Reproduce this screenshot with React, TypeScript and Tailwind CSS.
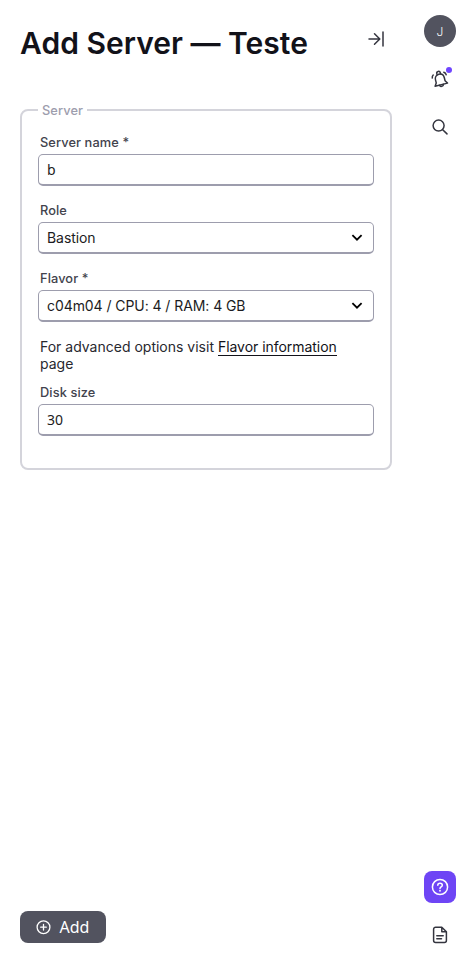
import React from "react";

const fieldBox =
  "flex h-8 w-full items-center justify-between rounded-[5px] border border-b-2 border-[#9d9dad] bg-white pl-2 pr-[9px] text-[14px] text-[#1c1c22]";

function Label({ children }: { children: React.ReactNode }) {
  return (
    <label className="block h-5 pl-[2px] pt-px text-[12.8px] leading-4 font-medium tracking-[0.1px] text-[#42434d]">
      {children}
    </label>
  );
}

function Chevron() {
  return (
    <svg width="14" height="14" viewBox="0 0 14 14" fill="none" stroke="#000" strokeWidth="1.8">
      <path d="M2.400 4.200 7 8.700l4.600-4.500" />
    </svg>
  );
}

function SelectField({ label, value }: { label: string; value: string }) {
  return (
    <div>
      <Label>{label}</Label>
      <div className={fieldBox}>
        <span className="tracking-[-0.07px]">{value}</span>
        <Chevron />
      </div>
    </div>
  );
}

function TextField({ label, value }: { label: string; value: string }) {
  return (
    <div>
      <Label>{label}</Label>
      <input className={fieldBox + " font-['Noto_Sans',sans-serif] outline-none"} defaultValue={value} />
    </div>
  );
}

function BellIcon() {
  return (
    <svg width="20" height="20" viewBox="0 0 20 20" fill="none" stroke="#34353f" strokeWidth="1.5" strokeLinecap="round" strokeLinejoin="round">
      <g transform="rotate(-14 10 10)">
        <path d="M3.500 15.800h12.800l-1.800-2.900V9.800c0-2.700-1.800-4.700-4.500-4.700S5.400 7.100 5.400 9.800v3.100z" />
        <path d="M8.200 5.100V4a1.800 1.800 0 0 1 3.600 0v1.100M8 16c.2 2.100 3.800 2.100 4 0" />
      </g>
      <path d="M3.200 6c-.8.800-1.100 1.900-.9 3M13.800 3.300c1.200.4 2 1.200 2.400 2.400" />
    </svg>
  );
}

function Rail() {
  return (
    <aside className="flex w-12 flex-col items-center justify-between pt-[15px] pb-[19px]">
      <div className="flex flex-col items-center">
        <div className="flex size-8 items-center justify-center rounded-full bg-[#52535f] pt-px text-[12px] font-light text-[#f4f4f8]">
          J
        </div>
        <div className="relative mt-[22px] flex size-5">
          <BellIcon />
          <span className="absolute -top-[2px] left-4 size-[6px] rounded-full bg-[#6f45ff]" />
        </div>
        <svg className="mt-7" width="20" height="20" viewBox="0 0 20 20" fill="none" stroke="#34353f" strokeWidth="1.500" strokeLinecap="round">
          <circle cx="8.600" cy="8.600" r="5.500" />
          <path d="m12.700 12.700 4.300 4.200" />
        </svg>
      </div>
      <div className="flex flex-col items-center gap-[22px]">
        <div className="flex size-8 items-center justify-center rounded-lg bg-[#6e45f5]">
          <svg width="20" height="20" viewBox="0 0 20 20" fill="none" stroke="#fff" strokeWidth="1.500" strokeLinecap="round" strokeLinejoin="round">
            <circle cx="10" cy="10" r="7.600" />
            <path d="M7.800 8.200c0-1.300 1-2 2.200-2s2.300.8 2.300 2c0 1.700-2.300 1.600-2.300 3.200" />
            <path d="M10 13.700v.1" strokeWidth="1.800" />
          </svg>
        </div>
        <svg width="20" height="20" viewBox="0 0 20 20" fill="none" stroke="#34353f" strokeWidth="1.500" strokeLinecap="round" strokeLinejoin="round">
          <path d="M11.800 2.200H5.600a2 2 0 0 0-2 2v11.200a2 2 0 0 0 2 2h8.800a2 2 0 0 0 2-2V6.800zM11.800 2.200v4.600h4.600M6.800 10.800h6.400M6.800 13.700h4.700" />
        </svg>
      </div>
    </aside>
  );
}

export default function App() {
  return (
    <div className="flex h-[964px] w-[464px] bg-white font-['Inter',sans-serif]">
      <main className="flex w-[416px] flex-col justify-between pt-6 pb-[21px] pl-5 pr-6">
        <div>
          <header className="flex h-[78px] items-start justify-between">
            <h1 className="text-[30px] leading-[38px] font-semibold tracking-[0.02px] whitespace-nowrap text-[#121219]">
              Add Server — Teste
            </h1>
            <svg className="mt-[5px] mr-[6px]" width="20" height="20" viewBox="0 0 20 20" fill="none" stroke="#34353f" strokeWidth="1.500" strokeLinecap="round" strokeLinejoin="round">
              <path d="M3 10h10.500M8.500 4.700l5.300 5.300-5.300 5.300M17 3v14" />
            </svg>
          </header>
          <fieldset className="h-[368px] rounded-lg border-2 border-[#d4d4db] px-4">
            <legend className="h-4 px-1 pt-px text-[12.8px] leading-4 font-medium tracking-[0.1px] text-[#9d9dad]">
              Server
            </legend>
            <div className="flex flex-col gap-4 pt-4">
              <TextField label="Server name *" value="b" />
              <SelectField label="Role" value="Bastion" />
              <div>
                <SelectField label="Flavor *" value="c04m04 / CPU: 4 / RAM: 4 GB" />
                <p className="mt-4 mb-3 pr-4 pl-[2px] text-[14px] leading-[17px] text-[#28282f]">
                  For advanced options visit{" "}
                  <a className="border-b border-[#121219] tracking-[-0.04px] text-[#121219]">Flavor information</a> page
                </p>
                <TextField label="Disk size" value="30" />
              </div>
            </div>
          </fieldset>
        </div>
        <button className="flex h-8 w-[86px] items-center gap-[8.500px] rounded-lg bg-[#52535f] pl-[15px] font-['Noto_Sans',sans-serif] text-[16px] text-white">
          <svg width="16" height="16" viewBox="0 0 16 16" fill="none" stroke="#fff" strokeWidth="1.300" strokeLinecap="round">
            <circle cx="8.500" cy="8.200" r="6.400" />
            <path d="M5.700 8.200h5.600M8.500 5.400v5.600" />
          </svg>
          Add
        </button>
      </main>
      <Rail />
    </div>
  );
}
